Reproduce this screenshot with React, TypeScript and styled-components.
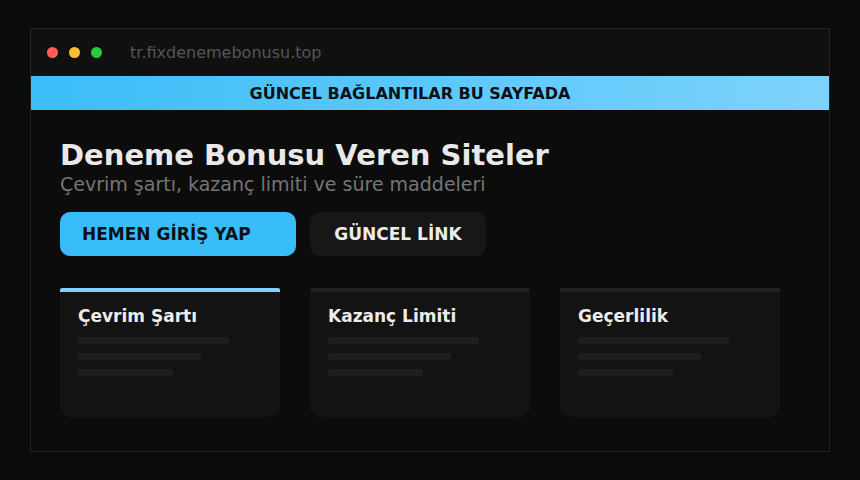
import React from "react";
import styled, { createGlobalStyle } from "styled-components";

const Global = createGlobalStyle`
  html, body { margin: 0; padding: 0; background: #0b0b0b; }
  body { font-family: "DejaVu Sans", "Noto Sans", sans-serif; }
`;

const Page = styled.div`
  width: 860px;
  height: 480px;
  padding: 28px 30px 0;
  box-sizing: border-box;
  background: #0b0b0b;
`;

const Window = styled.div`
  width: 800px;
  height: 424px;
  box-sizing: border-box;
  border: 1px solid #232323;
  background: #0c0c0c;
  display: flex;
  flex-direction: column;
`;

const TitleBar = styled.div`
  height: 47px;
  display: flex;
  align-items: center;
  padding-left: 16px;
  background: #111010;
`;

const Dot = styled.span<{ $c: string }>`
  width: 11px;
  height: 11px;
  border-radius: 50%;
  background: ${(p) => p.$c};
  margin-right: 11px;
`;

const Url = styled.span`
  margin-left: 17px;
  font-size: 16px;
  color: #555;
`;

const Banner = styled.div`
  height: 34px;
  display: flex;
  align-items: center;
  justify-content: center;
  padding-right: 40px;
  background: linear-gradient(90deg, #3bbdf8 0%, #7dd3fc 100%);
  color: #0a1018;
  font-weight: bold;
  font-size: 16px;
`;

const Content = styled.div`
  padding: 28px 29px 0;
`;

const Heading = styled.h1`
  margin: 0;
  font-size: 29px;
  font-weight: bold;
  color: #e9e9e9;
  line-height: 34px;
`;

const Sub = styled.p`
  margin: 0;
  font-size: 19px;
  color: #757575;
  line-height: 24px;
`;

const Buttons = styled.div`
  display: flex;
  gap: 14px;
  margin-top: 16px;
`;

const Button = styled.div<{ $primary?: boolean }>`
  height: 44px;
  box-sizing: border-box;
  width: ${(p) => (p.$primary ? "236px" : "176px")};
  padding-left: ${(p) => (p.$primary ? "22px" : "0")};
  justify-content: ${(p) => (p.$primary ? "flex-start" : "center")};
  display: flex;
  align-items: center;
  border-radius: 10px;
  background: ${(p) => (p.$primary ? "#38bdf8" : "#171717")};
  color: ${(p) => (p.$primary ? "#0a1018" : "#ececec")};
  font-weight: bold;
  font-size: 17px;
`;

const Cards = styled.div`
  display: flex;
  gap: 30px;
  margin-top: 32px;
`;

const Card = styled.div<{ $active?: boolean }>`
  width: 220px;
  height: 129px;
  box-sizing: border-box;
  border-top: 4px solid ${(p) => (p.$active ? "#7dd3fc" : "#212121")};
  border-radius: 2px 2px 12px 12px;
  background: #131313;
  padding: 14px 18px 0;
`;

const CardTitle = styled.div`
  font-size: 17px;
  font-weight: bold;
  color: #ececec;
  line-height: 20px;
`;

const Lines = styled.div`
  display: flex;
  flex-direction: column;
  gap: 9px;
  margin-top: 11px;
`;

const Line = styled.div<{ $w: number }>`
  width: ${(p) => p.$w}px;
  height: 7px;
  border-radius: 2px;
  background: #1f1f1f;
`;

const cards = [
  { title: "Çevrim Şartı", active: true },
  { title: "Kazanç Limiti" },
  { title: "Geçerlilik" },
];

export default function App() {
  return (
    <Page>
      <Global />
      <Window>
        <TitleBar>
          <Dot $c="#ff5f57" />
          <Dot $c="#febc2e" />
          <Dot $c="#28c840" />
          <Url>tr.fixdenemebonusu.top</Url>
        </TitleBar>
        <Banner>GÜNCEL BAĞLANTILAR BU SAYFADA</Banner>
        <Content>
          <Heading>Deneme Bonusu Veren Siteler</Heading>
          <Sub>Çevrim şartı, kazanç limiti ve süre maddeleri</Sub>
          <Buttons>
            <Button $primary>HEMEN GİRİŞ YAP</Button>
            <Button>GÜNCEL LİNK</Button>
          </Buttons>
          <Cards>
            {cards.map((c) => (
              <Card key={c.title} $active={c.active}>
                <CardTitle>{c.title}</CardTitle>
                <Lines>
                  <Line $w={151} />
                  <Line $w={123} />
                  <Line $w={95} />
                </Lines>
              </Card>
            ))}
          </Cards>
        </Content>
      </Window>
    </Page>
  );
}
